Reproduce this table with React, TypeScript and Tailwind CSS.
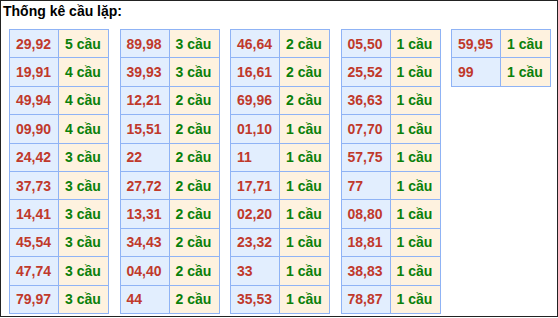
import React from "react";

const tables: [string, number][][] = [
  [["29,92", 5], ["19,91", 4], ["49,94", 4], ["09,90", 4], ["24,42", 3], ["37,73", 3], ["14,41", 3], ["45,54", 3], ["47,74", 3], ["79,97", 3]],
  [["89,98", 3], ["39,93", 3], ["12,21", 2], ["15,51", 2], ["22", 2], ["27,72", 2], ["13,31", 2], ["34,43", 2], ["04,40", 2], ["44", 2]],
  [["46,64", 2], ["16,61", 2], ["69,96", 2], ["01,10", 1], ["11", 1], ["17,71", 1], ["02,20", 1], ["23,32", 1], ["33", 1], ["35,53", 1]],
  [["05,50", 1], ["25,52", 1], ["36,63", 1], ["07,70", 1], ["57,75", 1], ["77", 1], ["08,80", 1], ["18,81", 1], ["38,83", 1], ["78,87", 1]],
  [["59,95", 1], ["99", 1]],
];

export default function App() {
  return (
    <div
      className="w-[558px] h-[317px] border border-[#222] bg-white text-[14px] font-bold"
      style={{ fontFamily: '"Liberation Sans", Arial, sans-serif' }}
    >
      <div className="pl-[2px] pt-[2px] leading-[16px] text-black">Thống kê cầu lặp:</div>
      <div className="flex items-start gap-[10.5px] pl-[8px] pt-[10px]">
        {tables.map((rows, ti) => (
          <div key={ti} className="w-[100px] flex flex-col border-l border-t border-[#8fb3f5]">
            {rows.map(([num, c], ri) => (
              <div key={ri} className="flex h-[28.4px]">
                <div className="w-[49px] flex items-center pl-[6px] pt-[1px] bg-[#e2eefe] text-[#c0392b] border-r border-b border-[#8fb3f5]">
                  {num}
                </div>
                <div className="w-[50px] flex items-center pl-[6px] pt-[1px] bg-[#fef2df] text-[#0a800a] border-r border-b border-[#8fb3f5]">
                  {c} cầu
                </div>
              </div>
            ))}
          </div>
        ))}
      </div>
    </div>
  );
}
